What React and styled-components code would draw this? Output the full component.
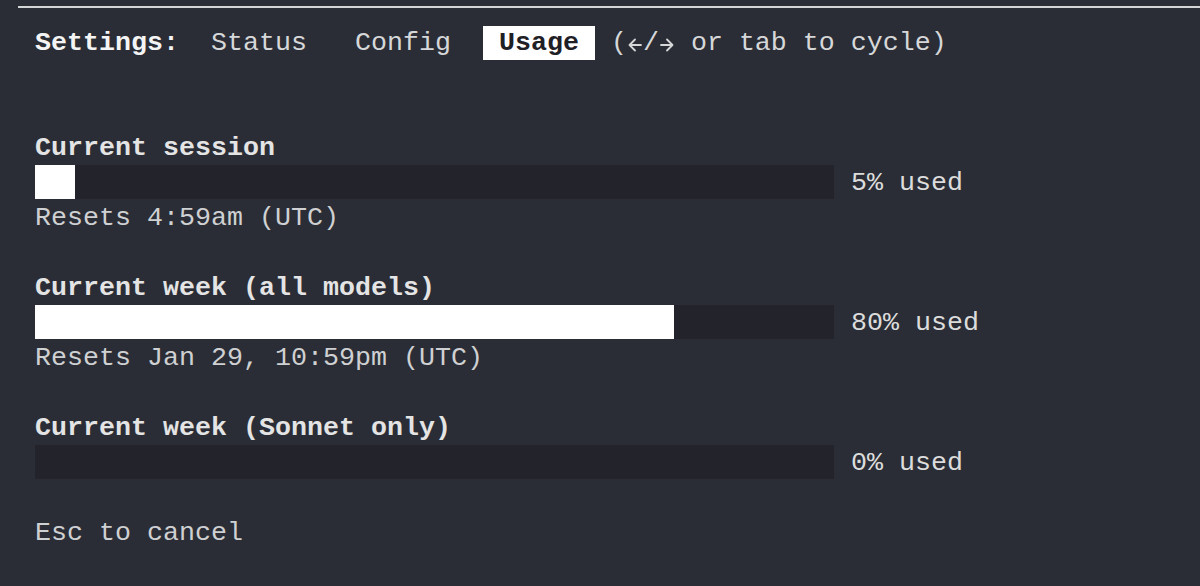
import React from 'react'
import styled, { createGlobalStyle } from 'styled-components'

const CW = 16

const GlobalStyle = createGlobalStyle`
  html, body {
    margin: 0;
    padding: 0;
    background: #2a2d35;
  }
  body {
    font-family: "Liberation Mono", "DejaVu Sans Mono", monospace;
    font-size: 26.67px;
    color: #e4e4e4;
    overflow: hidden;
  }
`

const Screen = styled.div`
  width: 1200px;
  height: 586px;
  padding-top: 6px;
  box-sizing: border-box;
`

const TopRule = styled.div`
  margin-left: 18px;
  height: 2px;
  background: #d2d4d6;
`

const Body = styled.div`
  padding: 18px 0 0 35px;
`

const Line = styled.div`
  height: 35px;
  line-height: 35px;
  white-space: pre;
  display: flex;
  align-items: center;
  color: ${p => p.$muted ? '#cfd0d2' : '#e4e4e4'};
  font-weight: ${p => p.$bold ? 700 : 400};
`

const Label = styled.span`
  font-weight: 700;
  color: #f4f4f4;
`

const Tab = styled.span`
  color: #d6d7d9;
`

const ActiveTab = styled.span`
  align-self: flex-start;
  display: inline-block;
  height: 34px;
  line-height: 35px;
  padding: 0 ${CW}px;
  background: #ffffff;
  color: #1f2026;
  font-weight: 700;
`

const Hint = styled.span`
  display: inline-flex;
  align-items: center;
  color: #d6d7d9;
`

const ArrowSvg = styled.svg`
  width: ${CW}px;
  height: 35px;
  display: block;
`

function Arrow({ dir }) {
  const d = dir === 'left'
    ? 'M14 19 H2.5 M8 13.5 L2.5 19 L8 24.5'
    : 'M2 19 H13.5 M8 13.5 L13.5 19 L8 24.5'
  return (
    <ArrowSvg viewBox="0 0 16 35">
      <path d={d} fill="none" stroke="#d6d7d9" strokeWidth="1.8" strokeLinecap="round" strokeLinejoin="round" />
    </ArrowSvg>
  )
}

const Track = styled.div`
  align-self: flex-start;
  margin-top: -1px;
  width: ${CW * 50 - 1}px;
  height: 34px;
  background: #22232b;
  display: flex;
`

const Fill = styled.div`
  height: 100%;
  background: #ffffff;
`

const Used = styled.span`
  margin-left: ${CW + 1}px;
  color: #dcdcdc;
`

function Meter({ pct }) {
  return (
    <Line>
      <Track>
        <Fill style={{ width: `${pct}%` }} />
      </Track>
      <Used>{pct}% used</Used>
    </Line>
  )
}

const rows = [
  { title: 'Current session', pct: 5, reset: 'Resets 4:59am (UTC)' },
  { title: 'Current week (all models)', pct: 80, reset: 'Resets Jan 29, 10:59pm (UTC)' },
  { title: 'Current week (Sonnet only)', pct: 0 },
]

export default function App() {
  return (
    <Screen>
      <GlobalStyle />
      <TopRule />
      <Body>
        <Line>
          <Label>Settings:</Label>
          <Tab>{'  Status   Config  '}</Tab>
          <ActiveTab>Usage</ActiveTab>
          <Hint>
            {' ('}<Arrow dir="left" />/<Arrow dir="right" />{' or tab to cycle)'}
          </Hint>
        </Line>
        <Line />
        <Line />
        {rows.map(r => (
          <React.Fragment key={r.title}>
            <Line $bold>{r.title}</Line>
            <Meter pct={r.pct} />
            {r.reset && <Line $muted>{r.reset}</Line>}
            <Line />
          </React.Fragment>
        ))}
        <Line $muted>Esc to cancel</Line>
      </Body>
    </Screen>
  )
}
